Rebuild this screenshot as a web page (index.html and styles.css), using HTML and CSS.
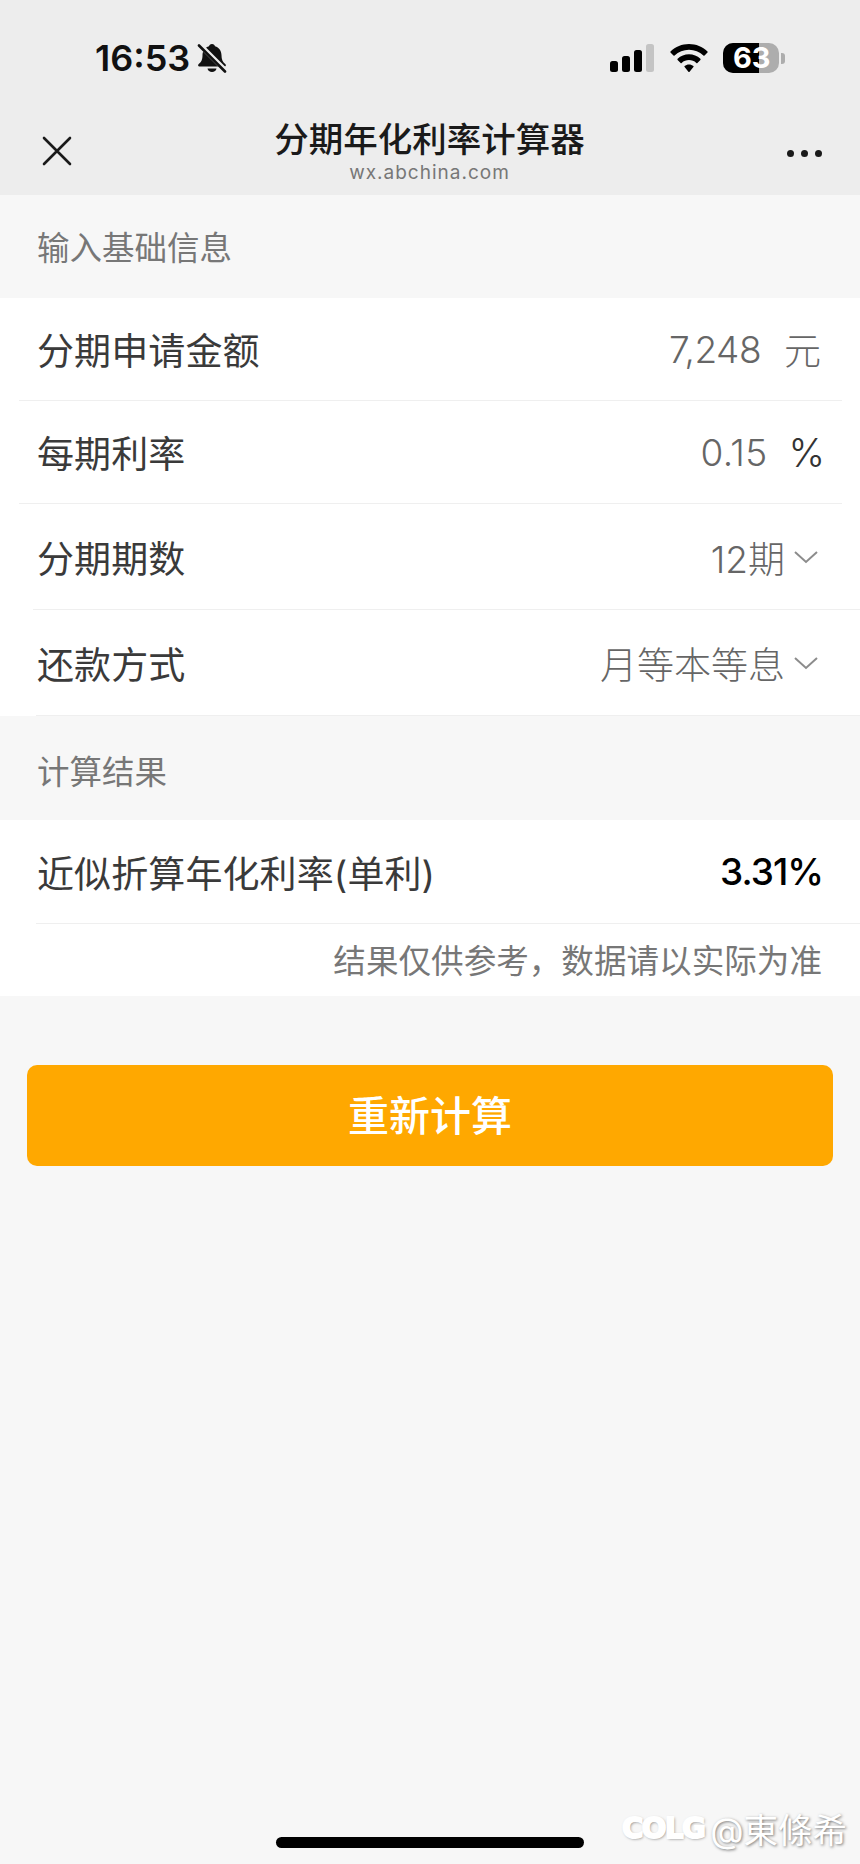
FILE: index.html
```html
<!DOCTYPE html>
<html lang="zh-CN">
<head>
    <meta charset="UTF-8">
    <meta name="viewport" content="width=device-width, initial-scale=1.0">
    <title>分期年化利率计算器</title>
    <link rel="stylesheet" href="styles.css">
</head>
<body>
    <div class="page">
        <header class="header">
            <div class="statusbar">
                <div class="status-left">
                    <span class="time">16:53</span>
                    <svg class="bell" viewBox="0 0 30 30" width="30" height="30">
                        <path d="M15 1c1.700 0 2.800 1 3 2.300 4 1.200 6.500 4.600 6.500 9 0 4.300 1 6.500 4 9 .8.800.3 2.200-.8 2.200H2.300c-1.100 0-1.600-1.400-.8-2.200 3-2.500 4-4.700 4-9 0-4.400 2.500-7.800 6.500-9C12.200 2 13.300 1 15 1z" fill="#111"/>
                        <path d="M10.500 25.500h9c-.3 2.200-2.200 3.600-4.500 3.600s-4.200-1.400-4.500-3.600z" fill="#111"/>
                        <path d="M1 0l28 28" stroke="#ededed" stroke-width="5"/>
                        <path d="M2 2.500l26 26" stroke="#111" stroke-width="2.600" stroke-linecap="round"/>
                    </svg>
                </div>
                <div class="status-right">
                    <svg class="signal" viewBox="0 0 44 28" width="44" height="28">
                        <rect x="0" y="17" width="8" height="11" rx="2.500" fill="#000"/>
                        <rect x="12" y="12" width="8" height="16" rx="2.500" fill="#000"/>
                        <rect x="24" y="6" width="8" height="22" rx="2.500" fill="#000"/>
                        <rect x="36" y="0" width="8" height="28" rx="2.500" fill="#c4c4c4"/>
                    </svg>
                    <svg class="wifi" viewBox="0 0 38 28" width="38" height="28">
                        <path d="M19 0c7 0 13.500 2.700 18.500 7.500.3.300.3.800 0 1.100l-3 3c-.3.300-.8.300-1.100 0C29.500 7.900 24.500 5.800 19 5.800S8.500 7.900 4.600 11.600c-.3.300-.8.300-1.100 0l-3-3c-.3-.3-.3-.8 0-1.100C5.500 2.700 12 0 19 0z" fill="#000"/>
                        <path d="M19 10.300c4.300 0 8.300 1.600 11.400 4.500.3.300.3.800 0 1.100l-3 3c-.3.300-.7.300-1.100 0-2-1.800-4.600-2.800-7.300-2.800s-5.300 1-7.300 2.800c-.4.300-.8.300-1.100 0l-3-3c-.3-.3-.3-.8 0-1.100 3.100-2.900 7.100-4.500 11.400-4.500z" fill="#000"/>
                        <path d="M19 20.400c1.700 0 3.200.6 4.400 1.600.3.300.3.800 0 1.100l-3.800 4.600c-.3.400-.9.400-1.200 0l-3.800-4.600c-.3-.3-.3-.8 0-1.100 1.200-1 2.700-1.600 4.400-1.600z" fill="#000"/>
                    </svg>
                    <div class="battery">
                        <div class="battery-body">
                            <div class="battery-fill"></div>
                            <span class="battery-num">63</span>
                        </div>
                        <div class="battery-tip"></div>
                    </div>
                </div>
            </div>
            <div class="navbar">
                <svg class="close" viewBox="0 0 30 30" width="30" height="30">
                    <path d="M2 2l26 26M28 2L2 28" stroke="#1a1a1a" stroke-width="2.600" stroke-linecap="round"/>
                </svg>
                <div class="nav-title">
                    <div class="title">分期年化利率计算器</div>
                    <div class="domain">wx.abchina.com</div>
                </div>
                <div class="more"><i></i><i></i><i></i></div>
            </div>
        </header>

        <div class="section-title">输入基础信息</div>
        <div class="group">
            <div class="row row-short">
                <span class="label">分期申请金额</span>
                <span class="value"><span class="num">7,248</span><span class="unit">元</span></span>
            </div>
            <div class="row row-short">
                <span class="label">每期利率</span>
                <span class="value"><span class="num num-rate">0.15</span><span class="unit unit-dark">%</span></span>
            </div>
            <div class="row row-tall row-select">
                <span class="label">分期期数</span>
                <span class="value">12期<svg class="chevron" viewBox="0 0 26 14" width="26" height="14"><path d="M2 2l11 10L24 2" fill="none" stroke="#8c8c8c" stroke-width="2"/></svg></span>
            </div>
            <div class="row row-tall row-select row-wide">
                <span class="label">还款方式</span>
                <span class="value">月等本等息<svg class="chevron" viewBox="0 0 26 14" width="26" height="14"><path d="M2 2l11 10L24 2" fill="none" stroke="#8c8c8c" stroke-width="2"/></svg></span>
            </div>
        </div>

        <div class="section-title section-title-2">计算结果</div>
        <div class="group">
            <div class="row row-result">
                <span class="label">近似折算年化利率(单利)</span>
                <span class="result">3.31%</span>
            </div>
            <div class="note">结果仅供参考，数据请以实际为准</div>
        </div>

        <div class="action">
            <button class="button">重新计算</button>
        </div>

        <div class="home-bar"></div>
        <div class="watermark"><span class="wm-logo">COLG</span><span class="wm-name">@東條希</span></div>
    </div>
</body>
</html>
```

FILE: styles.css
```css
* {
    box-sizing: border-box;
}
body {
    margin: 0;
    background: #f7f7f7;
    font-family: Inter, "Noto Sans CJK SC", sans-serif;
}
.page {
    position: relative;
    width: 860px;
    height: 1864px;
    overflow: hidden;
    background: #f7f7f7;
}
.header {
    height: 195px;
    background: #ededed;
}
.statusbar {
    display: flex;
    justify-content: space-between;
    height: 100px;
    padding: 43px 75px 0 95px;
}
.status-left {
    display: flex;
    align-items: center;
    gap: 7px;
    height: 30px;
}
.time {
    font-size: 36px;
    font-weight: 600;
    color: #111;
    line-height: 30px;
}
.status-right {
    display: flex;
    align-items: center;
    height: 30px;
}
.signal {
    margin-right: 16px;
}
.wifi {
    margin-right: 15px;
}
.battery {
    display: flex;
    align-items: center;
    gap: 2px;
}
.battery-body {
    position: relative;
    width: 56px;
    height: 30px;
    background: #adadad;
    border-radius: 10px;
}
.battery-fill {
    width: 36px;
    height: 100%;
    background: #000;
    border-radius: 10px 0 0 10px;
}
.battery-num {
    position: absolute;
    top: 0;
    left: 10px;
    font-size: 29px;
    font-weight: 700;
    line-height: 30px;
    color: #fff;
}
.battery-tip {
    width: 4px;
    height: 11px;
    background: #adadad;
    border-radius: 0 3px 3px 0;
}
.navbar {
    display: flex;
    justify-content: space-between;
    align-items: center;
    height: 95px;
    padding: 0 38px 0 42px;
}
.close {
    margin-top: 7px;
}
.nav-title {
    text-align: center;
    margin-top: 6px;
}
.title {
    font-size: 34.500px;
    line-height: 44px;
    font-weight: 500;
    color: #1a1a1a;
}
.domain {
    font-size: 19px;
    line-height: 22px;
    color: #777;
    letter-spacing: 1px;
}
.more {
    display: flex;
    gap: 7px;
    margin-top: 12px;
}
.more i {
    width: 7px;
    height: 7px;
    background: #1a1a1a;
    border-radius: 50%;
}
.section-title {
    height: 103px;
    padding: 5px 0 0 37px;
    font-size: 32.500px;
    line-height: 98px;
    color: #777;
}
.section-title-2 {
    height: 104px;
    padding-top: 9px;
    line-height: 95px;
}
.group {
    background: #fff;
}
.row {
    display: flex;
    justify-content: space-between;
    align-items: center;
    border-bottom: 1px solid #efefef;
    font-size: 37px;
    color: #3a3a3a;
}
.row-short {
    height: 103px;
    margin: 0 18px 0 19px;
    padding: 0 19px 0 18px;
}
.row-tall {
    height: 106px;
}
.row-select {
    margin-left: 33px;
    padding: 0 41px 0 4px;
}
.row-wide {
    margin-left: 36px;
    padding-left: 1px;
}
.row-result {
    height: 104px;
    margin-left: 36px;
    padding: 0 37px 0 1px;
}
.label {
    letter-spacing: 0.100px;
}
.value {
    display: flex;
    align-items: center;
    color: #666;
    font-weight: 300;
}
.num {
    letter-spacing: -0.500px;
}
.num-rate {
    letter-spacing: 0.300px;
}
.unit {
    margin: 0 2px 0 23px;
}
.unit-dark {
    margin: 0 -2px 0 21px;
    color: #333;
    font-size: 39px;
}
.chevron {
    margin-left: 8px;
}
.result {
    font-weight: 500;
    color: #000;
    letter-spacing: -1px;
}
.note {
    height: 72px;
    padding: 2px 38px 0 0;
    text-align: right;
    font-size: 32.600px;
    line-height: 70px;
    color: #777;
}
.action {
    padding: 69px 27px 0;
}
.button {
    display: block;
    width: 100%;
    height: 101px;
    padding: 0 0 6px;
    border: none;
    border-radius: 10px;
    background: #ffa800;
    color: white;
    font-family: inherit;
    font-size: 41px;
    font-weight: 500;
}
.home-bar {
    position: absolute;
    left: 276px;
    top: 1837px;
    width: 308px;
    height: 11px;
    background: #000;
    border-radius: 6px;
}
.watermark {
    position: absolute;
    left: 622px;
    top: 1803px;
    display: flex;
    align-items: center;
    gap: 6px;
    color: #fff;
    text-shadow: 1px 1px 3px #777;
}
.wm-logo {
    font-family: "DejaVu Sans", sans-serif;
    font-size: 29px;
    font-weight: 700;
    letter-spacing: -1.500px;
    -webkit-text-stroke: 2px #fff;
}
.wm-name {
    font-size: 34.500px;
}
```
